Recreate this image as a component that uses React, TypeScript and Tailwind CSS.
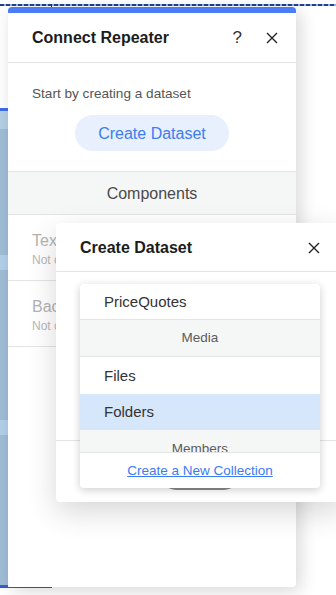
const font = { fontFamily: '"Liberation Sans", Arial, sans-serif' };

const CloseIcon = ({ size = 12 }: { size?: number }) => (
  <svg width={size} height={size} viewBox="0 0 12 12" fill="none">
    <path d="M1 1L11 11M11 1L1 11" stroke="#222" strokeWidth="1.4" />
  </svg>
);

const ItemRow = ({ title, sub }: { title: string; sub: string }) => (
  <div className="h-[66px] border-b border-[#e2e4e5] px-[24px] pt-[17px]">
    <p className="text-[16px] leading-[18px] text-[#b3b3b3]">{title}</p>
    <p className="text-[12px] leading-[16px] mt-[2px] text-[#b8b8b8]">{sub}</p>
  </div>
);

const App = () => {
  return (
    <div className="relative w-[336px] h-[595px] bg-white overflow-hidden" style={font}>
      {/* dashed selection edge along the top */}
      <div className="absolute left-0 top-[4px] w-full h-[2px] bg-[repeating-linear-gradient(90deg,#24408c_0_4px,#8fb2ee_4px_6px)]" />
      <div className="absolute left-[51px] top-[4px] w-[1px] h-[5px] bg-[#1b2c5c]" />

      {/* repeater strip on the left */}
      <div className="absolute left-0 top-[108px] w-[8px] h-[480px] bg-[#9fbdd6] flex flex-col">
        <div className="h-[3px] bg-[#3e6fe0]" />
        <div className="h-[18px] bg-[#b4cfe6]" />
        <div className="h-[126px]" />
        <div className="h-[15px] bg-[#b2d0ea]" />
        <div className="h-[150px]" />
        <div className="h-[15px] bg-[#b2d0ea]" />
        <div className="flex-1" />
        <div className="h-[3px] bg-[#3a5fd8]" />
      </div>
      <div className="absolute left-0 top-[587px] w-[52px] h-[1px] bg-[#2f55d4]" />

      {/* Connect Repeater panel */}
      <div className="absolute left-[8px] top-[7px] w-[288px] h-[580px] bg-white rounded-[4px] border-t-[6px] border-[#4a7cf5] shadow-[4px_4px_18px_rgba(0,0,0,0.16)]">
        <div className="h-[50px] flex items-center justify-between pl-[24px] pr-[18px] pt-[1px] border-b border-[#e2e4e5]">
          <h2 className="text-[16px] font-bold text-[#1c1c1c]">Connect Repeater</h2>
          <div className="flex items-center gap-[24px]">
            <span className="text-[17px] font-light text-[#333]">?</span>
            <CloseIcon />
          </div>
        </div>

        <div className="flex flex-col items-center pt-[22px] pb-[20px] border-b border-[#e2e4e5]">
          <p className="self-start pl-[24px] text-[13.6px] leading-[18px] text-[#555]">Start by creating a dataset</p>
          <button className="mt-[12px] w-[154px] h-[36px] pt-[1px] rounded-full bg-[#e8effd] text-[16px] text-[#3d7cf2]">
            Create Dataset
          </button>
        </div>

        <div className="h-[43px] flex items-center justify-center pt-[1px] bg-[#f5f6f6] border-b border-[#e2e4e5]">
          <span className="text-[16px] text-[#4a4a4a]">Components</span>
        </div>

        <ItemRow title="Text Title" sub="Not connected" />
        <ItemRow title="Background" sub="Not connected" />
      </div>

      {/* Create Dataset dialog */}
      <div className="absolute left-[56px] top-[223px] w-[288px] h-[279px] bg-white rounded-[4px] shadow-[0_10px_30px_rgba(0,0,0,0.16)]">
        <div className="h-[49px] flex items-center justify-between px-[24px] pt-[1px] border-b border-[#e2e4e5]">
          <h2 className="text-[16px] font-bold text-[#1c1c1c]">Create Dataset</h2>
          <CloseIcon />
        </div>
        <div className="h-[169px] border-b border-[#e2e4e5]" />
        <div className="flex justify-center pt-[19px]">
          <div className="w-[78px] h-[30px] rounded-full bg-[#8c8c8c]" />
        </div>

        {/* collection dropdown */}
        <div className="absolute left-[24px] top-[61px] w-[240px] bg-white rounded-[4px] shadow-[0_2px_8px_rgba(0,0,0,0.2)] overflow-hidden">
          <div className="h-[168px] overflow-hidden">
            <div className="h-[36px] flex items-center px-[24px] pt-[1px] border-b border-[#e2e4e5] text-[15px] text-[#333]">PriceQuotes</div>
            <div className="h-[37px] flex items-center justify-center pt-[1px] bg-[#f5f6f6] border-b border-[#e2e4e5] text-[13.5px] text-[#5c5c5c]">Media</div>
            <div className="h-[37px] flex items-center px-[24px] pt-[1px] text-[15px] text-[#333]">Files</div>
            <div className="h-[36px] flex items-center px-[24px] pt-[1px] bg-[#d6e6fb] text-[15px] text-[#333]">Folders</div>
            <div className="h-[37px] flex items-center justify-center pt-[1px] bg-[#f5f6f6] text-[13.5px] text-[#5c5c5c]">Members</div>
          </div>
          <div className="h-[36px] flex items-center justify-center pt-[1px] border-t border-[#e2e4e5]">
            <span className="text-[13.5px] text-[#3b7bf3] underline">Create a New Collection</span>
          </div>
        </div>
      </div>
    </div>
  );
};

export default App;
